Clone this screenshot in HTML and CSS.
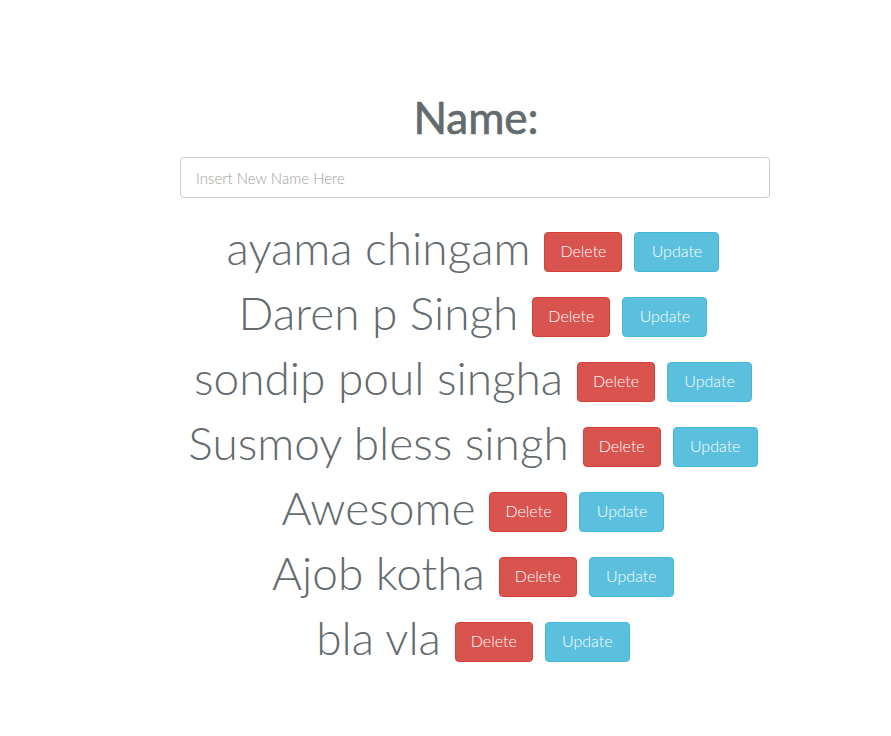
FILE: index.html
```html
<!DOCTYPE html>
<html>
<head>
<meta charset="utf-8">
<link rel="stylesheet" href="styles.css">
</head>
<body>
<div class="content">
  <h1 class="title">Name:</h1>
  <input class="name-input" type="text" placeholder="Insert New Name Here">
  <ul class="names">
    <li class="row"><span class="name">ayama chingam</span><button class="btn btn-danger">Delete</button><button class="btn btn-info">Update</button></li>
    <li class="row"><span class="name">Daren p Singh</span><button class="btn btn-danger">Delete</button><button class="btn btn-info">Update</button></li>
    <li class="row"><span class="name">sondip poul singha</span><button class="btn btn-danger">Delete</button><button class="btn btn-info">Update</button></li>
    <li class="row"><span class="name">Susmoy bless singh</span><button class="btn btn-danger">Delete</button><button class="btn btn-info">Update</button></li>
    <li class="row"><span class="name">Awesome</span><button class="btn btn-danger">Delete</button><button class="btn btn-info">Update</button></li>
    <li class="row"><span class="name">Ajob kotha</span><button class="btn btn-danger">Delete</button><button class="btn btn-info">Update</button></li>
    <li class="row"><span class="name">bla vla</span><button class="btn btn-danger">Delete</button><button class="btn btn-info">Update</button></li>
  </ul>
</div>
</body>
</html>
```
FILE: styles.css
```css
html, body {
  margin: 0;
  padding: 0;
  background: #fff;
}
body {
  font-family: Lato, "Noto Sans", sans-serif;
  font-weight: 300;
  color: #636b6f;
}
.content {
  width: 590px;
  margin-left: 180px;
  padding-top: 87px;
  display: flex;
  flex-direction: column;
  align-items: center;
}
.title {
  margin: 0;
  font-size: 44px;
  font-weight: 400;
  -webkit-text-stroke: 0.7px #636b6f;
  line-height: 60px;
  height: 60px;
  padding-left: 2px;
}
.name-input {
  box-sizing: border-box;
  width: 590px;
  height: 41px;
  margin-top: 10px;
  border: 1px solid #ccc;
  border-radius: 4px;
  padding: 0 15px;
  font-family: Lato, sans-serif;
  font-size: 15px;
  font-weight: 300;
  color: #555;
}
.name-input::placeholder {
  color: #a0a0a0;
}
.names {
  list-style: none;
  margin: 0;
  padding: 0;
  margin-top: 34px;
  display: flex;
  flex-direction: column;
  align-items: center;
  gap: 25px;
  padding-right: 4px;
}
.row {
  display: flex;
  align-items: center;
  height: 40px;
}
.name {
  font-size: 46px;
  line-height: 40px;
  padding-bottom: 9px;
  margin-right: 14px;
  white-space: nowrap;
}
.btn {
  box-sizing: border-box;
  height: 40px;
  padding: 0 0 3px;
  border-radius: 4px;
  border: 1px solid;
  font-family: Lato, sans-serif;
  font-weight: 300;
  font-size: 16px;
  color: #fff;
  cursor: pointer;
}
.btn + .btn {
  margin-left: 12px;
}
.btn-danger {
  background: #d9534f;
  border-color: #d43f3a;
  width: 78px;
}
.btn-info {
  background: #5bc0de;
  border-color: #46b8da;
  width: 85px;
}
```
